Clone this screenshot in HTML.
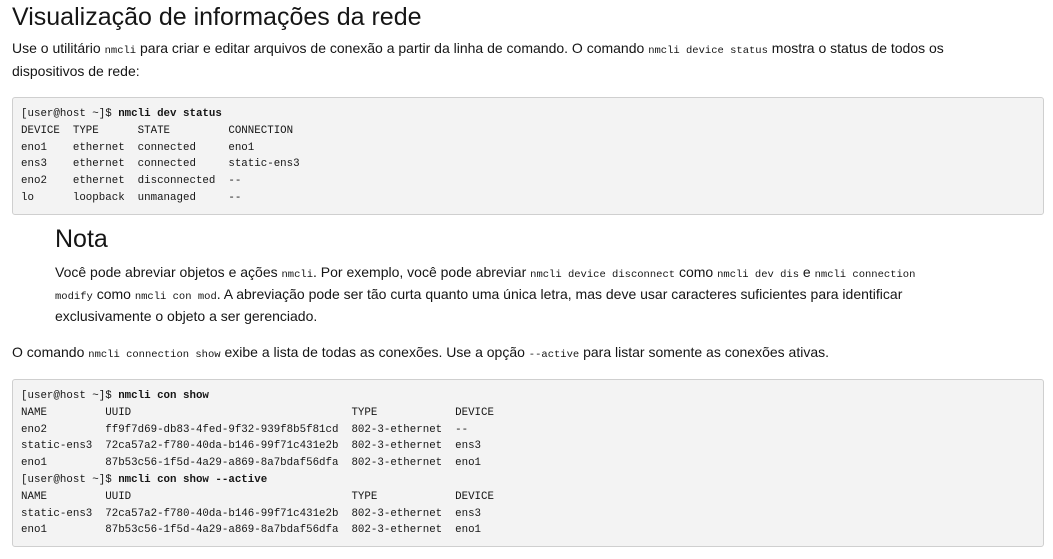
<!DOCTYPE html>
<html><head><meta charset="utf-8"><style>
body{margin:0;width:1053px;height:559px;background:#fff;color:#151515;font-family:"Liberation Sans",sans-serif;overflow:hidden;position:relative}
.a{position:absolute;white-space:nowrap}
h1{position:absolute;margin:0;font-weight:normal;font-size:25px;left:12px;top:3px}
h2{position:absolute;margin:0;font-weight:normal;font-size:25px;left:55px;top:225px}
p{position:absolute;margin:0;font-size:14px;line-height:23px}
code{font-family:"Liberation Mono",monospace;font-size:10.5px;line-height:1}
pre{position:absolute;margin:0;left:12px;width:1022px;background:#f3f3f3;border:1px solid #cfcfcf;border-radius:3px;padding:8px 0 0 8px;font-family:"Liberation Mono",monospace;font-size:10.8px;line-height:16.8px;color:#151515}
</style></head><body>
<h1>Visualização de informações da rede</h1>
<p style="left:12px;top:37px;width:985px">Use o utilitário <code>nmcli</code> para criar e editar arquivos de conexão a partir da linha de comando. O comando <code>nmcli device status</code> mostra o status de todos os dispositivos de rede:</p>
<pre style="top:97px;height:108px">[user@host ~]$ <b>nmcli dev status</b>
DEVICE  TYPE      STATE         CONNECTION
eno1    ethernet  connected     eno1
ens3    ethernet  connected     static-ens3
eno2    ethernet  disconnected  --
lo      loopback  unmanaged     --</pre>
<h2>Nota</h2>
<p style="left:55px;top:261px;width:898px;line-height:22px">Você pode abreviar objetos e ações <code>nmcli</code>. Por exemplo, você pode abreviar <code>nmcli device disconnect</code> como <code>nmcli dev dis</code> e <code>nmcli connection modify</code> como <code>nmcli con mod</code>. A abreviação pode ser tão curta quanto uma única letra, mas deve usar caracteres suficientes para identificar exclusivamente o objeto a ser gerenciado.</p>
<p class="a" style="left:12px;top:341px">O comando <code>nmcli connection show</code> exibe a lista de todas as conexões. Use a opção <code>--active</code> para listar somente as conexões ativas.</p>
<pre style="top:379px;height:158px">[user@host ~]$ <b>nmcli con show</b>
NAME         UUID                                  TYPE            DEVICE
eno2         ff9f7d69-db83-4fed-9f32-939f8b5f81cd  802-3-ethernet  --
static-ens3  72ca57a2-f780-40da-b146-99f71c431e2b  802-3-ethernet  ens3
eno1         87b53c56-1f5d-4a29-a869-8a7bdaf56dfa  802-3-ethernet  eno1
[user@host ~]$ <b>nmcli con show --active</b>
NAME         UUID                                  TYPE            DEVICE
static-ens3  72ca57a2-f780-40da-b146-99f71c431e2b  802-3-ethernet  ens3
eno1         87b53c56-1f5d-4a29-a869-8a7bdaf56dfa  802-3-ethernet  eno1</pre>
</body></html>
